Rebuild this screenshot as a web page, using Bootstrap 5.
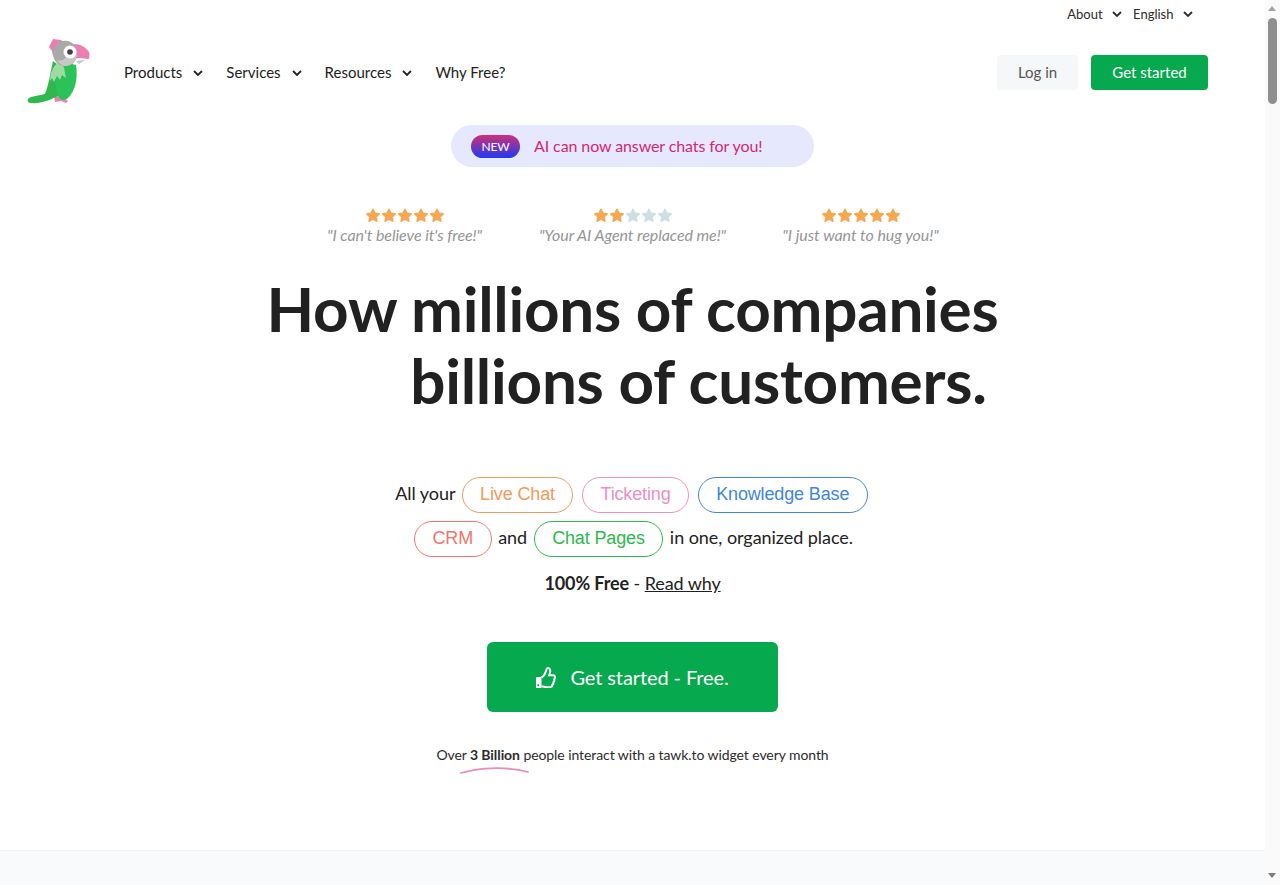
<!DOCTYPE html>
<html lang="en">
<head>
    <meta charset="UTF-8">
    <meta name="viewport" content="width=device-width, initial-scale=1">
    <title>tawk.to</title>
    <link href="https://cdn.jsdelivr.net/npm/bootstrap@5.3.2/dist/css/bootstrap.min.css" rel="stylesheet">
    <style>
        body {
            font-family: 'Lato', sans-serif;
            color: #212121;
            background: #fff;
        }
        a { color: inherit; text-decoration: none; }
        .page-wrap { margin-right: 15px; }

        /* the classic scrollbar of the screenshot */
        .scroll-strip { position: fixed; top: 0; right: 0; bottom: 0; width: 15px; background: #fafafa; }
        .scroll-thumb { position: absolute; top: 18px; left: 3px; width: 9px; height: 86px; border-radius: 5px; background: #8f8f8f; }
        .scroll-arrow { position: absolute; left: 3px; width: 0; height: 0; border-left: 4.5px solid transparent; border-right: 4.5px solid transparent; }
        .scroll-up { top: 6px; border-bottom: 5px solid #a3a3a3; }
        .scroll-down { bottom: 7px; border-top: 5px solid #7a7a7a; }

        .top-links { height: 29px; padding-right: 72px; gap: 11px; font-size: 13px; }
        .top-links a { color: #2b2b2b; }
        .chev { width: 10px; height: 6px; margin-left: 9.5px; vertical-align: 2px; }

        .main-nav { height: 86px; padding: 0 57px 0 24px; }
        .bird { width: 70px; height: 70px; margin-right: 30px; margin-top: -2px; }
        .nav-links { gap: 23px; font-size: 15px; }
        .nav-links .chev { width: 10px; margin-left: 11px; }

        .btn-login, .btn-start { height: 35px; font-size: 15px; line-height: 35px; padding: 0; border: 0; border-radius: 4px; }
        .btn-login { width: 81px; background: #f6f7f9; color: #555; }
        .btn-start { width: 117px; margin-left: 13px; background: #06a94d; color: #fff; }
        .btn-start:hover, .btn-hero:hover { background: #06a94d; color: #fff; }

        .promo {
            width: 363px; height: 42px; margin-top: 10px; padding-left: 20px;
            background: #e6e8fd; border-radius: 21px;
            color: #d3286f; font-size: 16px; letter-spacing: -.1px;
        }
        .promo-tag {
            width: 49px; height: 23px; margin-right: 14px; border-radius: 12px;
            background: linear-gradient(#cf2f78, #1f3af2);
            color: #fff; font-size: 12px; line-height: 23px; text-align: center;
        }

        .quotes { margin-top: 41px; }
        .quote-item { width: 228px; text-align: center; }
        .quote-item p { margin: 0; font-size: 16px; line-height: 20px; font-style: italic; color: #959595; letter-spacing: -.07px; }
        .stars { height: 15px; margin-bottom: 2px; line-height: 15px; }
        .stars svg { width: 16px; height: 15px; display: inline-block; vertical-align: top; }
        .star-on { fill: #f4a84f; stroke: #f4a84f; }
        .star-off { fill: #cfdee2; stroke: #cfdee2; }

        .hero-title { margin: 27px 0 0; font-size: 62px; line-height: 72px; font-weight: 700; color: #212121; text-align: center; letter-spacing: -.25px; }
        .rotating-word { display: inline-block; width: 132px; }

        .tag-lines { margin-top: 55px; font-size: 18px; line-height: 44px; text-align: center; letter-spacing: -.05px; }
        .tag-pill {
            display: inline-block; height: 36px; padding: 0 17.5px; margin: 0 2px;
            border: 1px solid; border-radius: 18px;
            font-family: 'Liberation Sans', sans-serif; line-height: 32px; letter-spacing: -.14px;
            vertical-align: baseline;
        }
        .pill-orange { color: #ee9a5c; border-color: #ee9a5c; }
        .pill-pink { color: #ea90c4; border-color: #ea90c4; }
        .pill-blue { color: #3f87d3; border-color: #3f87d3; }
        .pill-red { color: #f2746b; border-color: #f2746b; }
        .pill-green { color: #2cb84c; border-color: #2cb84c; }

        .free-line { margin-top: 12px; font-size: 18px; line-height: 24px; text-align: center; letter-spacing: -.1px; }
        .free-line a { text-decoration: underline; }

        .btn-hero {
            width: 291px; height: 70px; margin-top: 47px; gap: 14px;
            background: #06a94d; color: #fff; border: 0; border-radius: 6px; font-size: 20px; letter-spacing: -.1px;
        }
        .btn-hero svg { width: 20px; height: 21px; }

        .reach-line { margin: 33px 0 0; font-size: 14px; line-height: 20px; text-align: center; color: #2b2b2b; letter-spacing: -.08px; }
        .reach-mark { position: relative; font-weight: 700; }
        .reach-mark svg { position: absolute; left: -10px; top: 20px; width: 70px; height: 10px; }

        .next-section { margin-top: 85px; height: 7900px; background: #f9fafc; border-top: 1px solid #f1f2f5; }
    </style>
</head>
<body>
    <svg width="0" height="0" class="d-block">
        <defs>
            <symbol id="star" viewBox="0 0 24 24">
                <path d="M12 2.500l2.900 6.200 6.700.8-5 4.600 1.400 6.700-6-3.400-6 3.400 1.400-6.700-5-4.600 6.700-.8z" stroke-width="3" stroke-linejoin="round"/>
            </symbol>
            <symbol id="chev" viewBox="0 0 10 6">
                <path d="M1 1l4 4 4-4" fill="none" stroke="currentColor" stroke-width="1.800"/>
            </symbol>
        </defs>
    </svg>

    <div class="page-wrap">
        <div class="top-links d-flex justify-content-end align-items-center">
            <a href="#">About<svg class="chev"><use href="#chev"/></svg></a>
            <a href="#">English<svg class="chev"><use href="#chev"/></svg></a>
        </div>

        <nav class="main-nav d-flex align-items-center">
            <svg class="bird" viewBox="24 37 70 70">
                <!-- feet -->
                <path d="M54 97l8 1 6 4-2 2-5-2-6 1z" fill="#ec7fb1"/>
                <!-- tail and body -->
                <path d="M53 62C50 75 49 85 45 95L31 98C26 100 27 104 31 104 42 105 52 100 60 96L64 70z" fill="#2fb84f"/>
                <!-- wing -->
                <path d="M60 62L76 66C78 78 76 92 67 100 63 102 60 101 58 97 54 85 56 72 60 62z" fill="#2cc25a"/>
                <!-- chest -->
                <path d="M50 82C50 74 53 67 58 64L63 66C65 71 65 75 66 79L62 76 60 81 57 77 54 83 52 79z" fill="#9adca2"/>
                <!-- crest -->
                <path d="M53 40l8 1 4 3-9 13-3 0-1-5-3-4z" fill="#ec7fb1"/>
                <!-- beak -->
                <path d="M74 45c6 0 12 3 15 8 1 3 0 6 0 7l-10-1-6 1z" fill="#ec7fb1"/>
                <path d="M76 62l9-1-6 4z" fill="#c5c5c5"/>
                <!-- head -->
                <path d="M53 52c1-6 7-11 14-10 7 1 11 7 10 14-1 7-5 11-12 11-8 0-13-7-12-15z" fill="#a9a9a9"/>
                <path d="M57 61c6 2 10-2 11-8l9 1c0 7-4 12-11 13-3 0-7-2-9-6z" fill="#c8c8c8"/>
                <circle cx="70" cy="53" r="6.500" fill="#fff"/>
                <circle cx="70" cy="53" r="2.800" fill="#4a3f46"/>
            </svg>
            <div class="nav-links d-flex">
                <a href="#">Products<svg class="chev"><use href="#chev"/></svg></a>
                <a href="#">Services<svg class="chev"><use href="#chev"/></svg></a>
                <a href="#">Resources<svg class="chev"><use href="#chev"/></svg></a>
                <a href="#">Why Free?</a>
            </div>
            <div class="ms-auto d-flex">
                <a class="btn btn-login" href="#">Log in</a>
                <a class="btn btn-start" href="#">Get started</a>
            </div>
        </nav>

        <main class="d-flex flex-column align-items-center">
            <a class="promo d-flex align-items-center" href="#">
                <span class="promo-tag">NEW</span>
                <span>AI can now answer chats for you!</span>
            </a>

            <div class="quotes d-flex justify-content-center">
                <div class="quote-item">
                    <div class="stars"><svg class="star-on"><use href="#star"/></svg><svg class="star-on"><use href="#star"/></svg><svg class="star-on"><use href="#star"/></svg><svg class="star-on"><use href="#star"/></svg><svg class="star-on"><use href="#star"/></svg></div>
                    <p>"I can't believe it's free!"</p>
                </div>
                <div class="quote-item">
                    <div class="stars"><svg class="star-on"><use href="#star"/></svg><svg class="star-on"><use href="#star"/></svg><svg class="star-off"><use href="#star"/></svg><svg class="star-off"><use href="#star"/></svg><svg class="star-off"><use href="#star"/></svg></div>
                    <p>"Your AI Agent replaced me!"</p>
                </div>
                <div class="quote-item">
                    <div class="stars"><svg class="star-on"><use href="#star"/></svg><svg class="star-on"><use href="#star"/></svg><svg class="star-on"><use href="#star"/></svg><svg class="star-on"><use href="#star"/></svg><svg class="star-on"><use href="#star"/></svg></div>
                    <p>"I just want to hug you!"</p>
                </div>
            </div>

            <h1 class="hero-title">How millions of companies<br><span class="rotating-word"></span>billions of customers.</h1>

            <div class="tag-lines">
                <div>All your <a class="tag-pill pill-orange" href="#">Live Chat</a> <a class="tag-pill pill-pink" href="#">Ticketing</a> <a class="tag-pill pill-blue" href="#">Knowledge Base</a></div>
                <div><a class="tag-pill pill-red" href="#">CRM</a> and <a class="tag-pill pill-green" href="#">Chat Pages</a> in one, organized place.</div>
            </div>

            <p class="free-line mb-0"><b>100% Free</b> - <a href="#">Read why</a></p>

            <a class="btn btn-hero d-flex align-items-center justify-content-center" href="#">
                <svg viewBox="0 0 20 21">
                    <path d="M0 10h5.500v11H0z" fill="#fff"/>
                    <circle cx="2.200" cy="18.200" r="1" fill="#06a94d"/>
                    <path d="M5.500 10.500c2-1 3.500-3.500 4.300-6 .5-1.500.6-3.500 2-3.500 2.200 0 2.900 2.500 2.100 5l-.8 2.300h3.700c1.300 0 2.200 1 2.200 2.200 0 .8-.4 1.400-.8 1.800.4 1.300 0 2.300-.8 2.900.2 1.200-.2 2.200-1.100 2.700 0 1.400-1 2.300-2.400 2.300H10.500c-2 0-3-1-5-1" fill="none" stroke="#fff" stroke-width="2"/>
                </svg>
                <span>Get started - Free.</span>
            </a>

            <p class="reach-line">Over <span class="reach-mark">3 Billion<svg viewBox="0 0 70 10"><path d="M1 7C15 3 42-1 68 6" fill="none" stroke="#e58cc0" stroke-width="1.800" stroke-linecap="round"/></svg></span> people interact with a tawk.to widget every month</p>
        </main>

        <section class="next-section"></section>
    </div>

    <aside class="scroll-strip">
        <div class="scroll-arrow scroll-up"></div>
        <div class="scroll-thumb"></div>
        <div class="scroll-arrow scroll-down"></div>
    </aside>

    <script src="https://cdn.jsdelivr.net/npm/bootstrap@5.3.2/dist/js/bootstrap.bundle.min.js"></script>
</body>
</html>
